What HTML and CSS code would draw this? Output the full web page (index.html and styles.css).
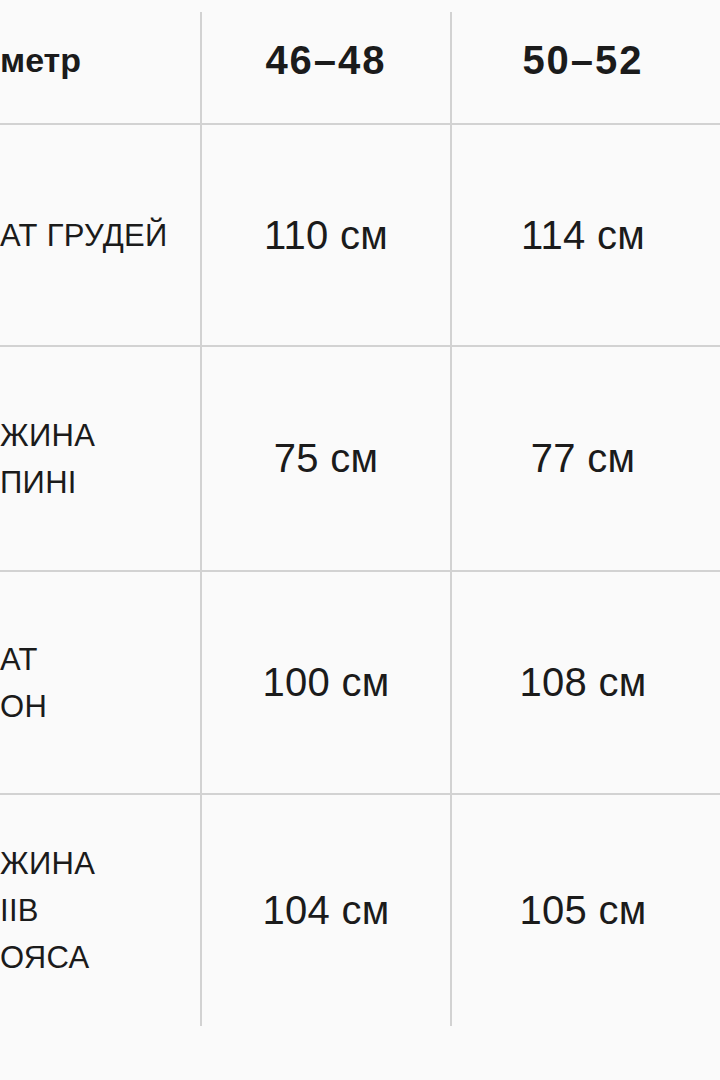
FILE: index.html
```html
<!DOCTYPE html>
<html lang="uk">
<head>
<meta charset="utf-8">
<title>Таблиця розмірів</title>
<link rel="stylesheet" href="styles.css">
</head>
<body>
<div class="table">
  <div class="cell head label">метр</div>
  <div class="cell head val">46–48</div>
  <div class="cell head val">50–52</div>

  <div class="cell row label">АТ ГРУДЕЙ</div>
  <div class="cell row val">110 см</div>
  <div class="cell row val">114 см</div>

  <div class="cell row label">ЖИНА<br>ПИНІ</div>
  <div class="cell row val">75 см</div>
  <div class="cell row val">77 см</div>

  <div class="cell row label">АТ<br>ОН</div>
  <div class="cell row val">100 см</div>
  <div class="cell row val">108 см</div>

  <div class="cell row last label">ЖИНА<br>ІІВ<br>ОЯСА</div>
  <div class="cell row last val">104 см</div>
  <div class="cell row last val">105 см</div>
</div>
</body>
</html>
```

FILE: styles.css
```css
html, body {
  margin: 0;
  padding: 0;
  background: #fafafa;
  overflow: hidden;
}

body {
  padding-top: 12px;
  font-family: "Liberation Sans", Arial, sans-serif;
  color: #1b1b1b;
}

.table {
  display: grid;
  grid-template-columns: 200px 250px 270px;
  grid-template-rows: 111px 222px 225px 223px 233px;
}

.cell {
  box-sizing: border-box;
  display: flex;
  align-items: center;
}

.cell.row {
  border-top: 2px solid #d2d2d2;
}

.cell.val {
  border-left: 2px solid #d2d2d2;
  justify-content: center;
  font-size: 40px;
  letter-spacing: 0.3px;
}

.cell.head {
  padding-bottom: 14px;
  font-weight: bold;
  font-size: 40px;
}

.cell.head.val {
  letter-spacing: 2px;
}

.cell.label {
  font-size: 31px;
  line-height: 47px;
  letter-spacing: 0.3px;
}

.cell.head.label {
  font-size: 34px;
  letter-spacing: 0;
}

.cell.val:nth-child(3n) {
  padding-right: 6px;
}
```
